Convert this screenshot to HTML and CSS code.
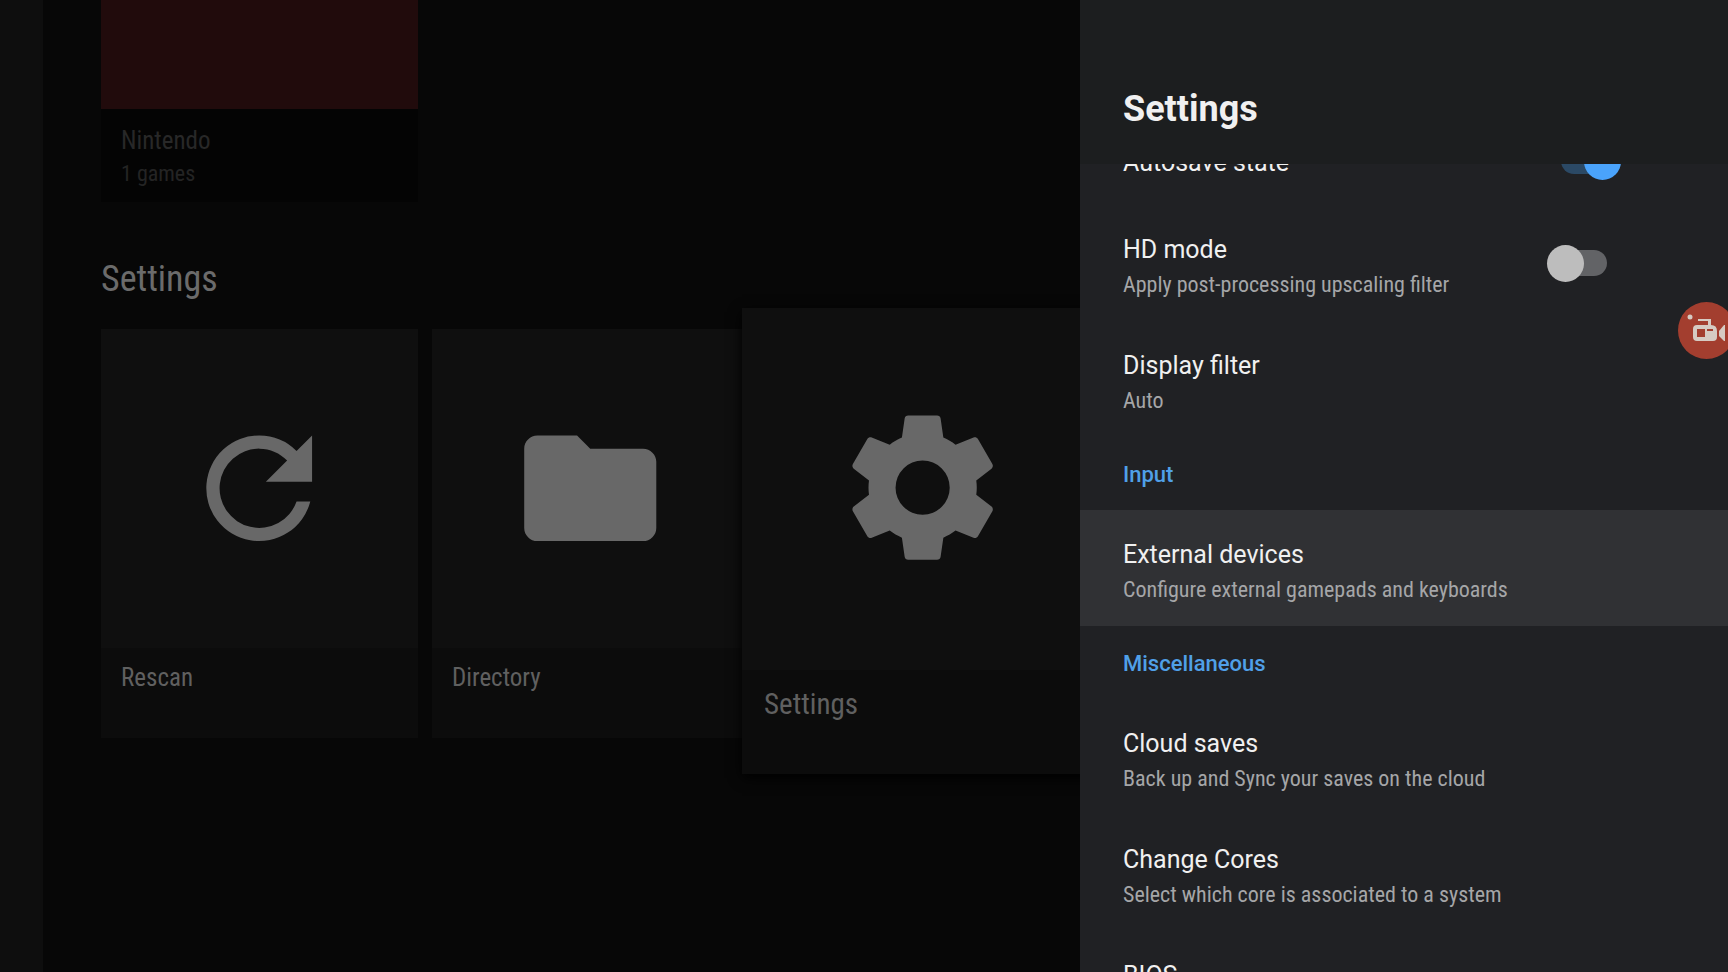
FILE: index.html
```html
<!DOCTYPE html>
<html lang="en">
<head>
<meta charset="utf-8">
<title>Settings</title>
<link rel="stylesheet" href="styles.css">
</head>
<body>
<div class="app">
  <nav class="rail" aria-label="Categories"></nav>
  <main class="browse">
    <div class="row row-systems">
      <button class="card card-system" type="button">
        <span class="art art-red"></span>
        <span class="info"><span class="card-title">Nintendo</span><span class="card-sub">1 games</span></span>
      </button>
    </div>
    <h2 class="row-title">Settings</h2>
    <div class="row">
      <button class="card" type="button">
        <span class="art"><svg class="icon" viewBox="0 0 24 24"><path d="M17.65 6.35A7.96 7.96 0 0 0 12 4a8 8 0 1 0 7.73 10h-2.08A6 6 0 1 1 12 6c1.66 0 3.14.69 4.22 1.78L13 11h7V4z"/></svg></span>
        <span class="info"><span class="card-title">Rescan</span></span>
      </button>
      <button class="card" type="button">
        <span class="art"><svg class="icon" viewBox="0 0 24 24"><path d="M10 4H4c-1.100 0-2 .9-2 2v12c0 1.100.9 2 2 2h16c1.100 0 2-.9 2-2V8c0-1.100-.9-2-2-2h-8z"/></svg></span>
        <span class="info"><span class="card-title">Directory</span></span>
      </button>
      <button class="card card-focused" type="button">
        <span class="art"><svg class="icon" viewBox="0 0 24 24"><path d="M19.430 12.980c.04-.32.07-.64.07-.98s-.03-.66-.07-.98l2.110-1.650c.19-.15.24-.42.12-.64l-2-3.460c-.12-.22-.39-.3-.61-.22l-2.490 1c-.52-.4-1.080-.73-1.690-.98l-.38-2.650C14.460 2.180 14.250 2 14 2h-4c-.25 0-.46.18-.49.42l-.38 2.650c-.61.25-1.170.59-1.690.98l-2.490-1c-.23-.09-.49 0-.61.22l-2 3.460c-.13.22-.07.49.12.64l2.110 1.650c-.04.32-.07.65-.07.98s.03.66.07.98l-2.110 1.650c-.19.15-.24.42-.12.64l2 3.460c.12.22.39.3.61.22l2.490-1c.52.4 1.080.73 1.690.98l.38 2.650c.03.24.24.42.49.42h4c.25 0 .46-.18.49-.42l.38-2.650c.61-.25 1.170-.59 1.690-.98l2.490 1c.23.09.49 0 .61-.22l2-3.460c.12-.22.07-.49-.12-.64zM12 15.750a3.750 3.750 0 1 1 0-7.500 3.750 3.750 0 0 1 0 7.500z"/></svg></span>
        <span class="info"><span class="card-title">Settings</span></span>
      </button>
    </div>
  </main>
  <aside class="panel">
    <header class="panel-head"><h1 class="panel-title">Settings</h1></header>
    <div class="prefs">
      <div class="pref pref-single">
        <label class="pref-title" for="autosave">Autosave state</label>
        <input class="switch" type="checkbox" id="autosave" checked>
      </div>
      <div class="pref">
        <label class="pref-text" for="hd"><span class="pref-title">HD mode</span><span class="pref-sub">Apply post-processing upscaling filter</span></label>
        <input class="switch" type="checkbox" id="hd">
      </div>
      <button class="pref" type="button"><span class="pref-text"><span class="pref-title">Display filter</span><span class="pref-sub">Auto</span></span></button>
      <h2 class="category">Input</h2>
      <button class="pref pref-focused" type="button"><span class="pref-text"><span class="pref-title">External devices</span><span class="pref-sub">Configure external gamepads and keyboards</span></span></button>
      <h2 class="category">Miscellaneous</h2>
      <button class="pref" type="button"><span class="pref-text"><span class="pref-title">Cloud saves</span><span class="pref-sub">Back up and Sync your saves on the cloud</span></span></button>
      <button class="pref" type="button"><span class="pref-text"><span class="pref-title">Change Cores</span><span class="pref-sub">Select which core is associated to a system</span></span></button>
      <button class="pref" type="button"><span class="pref-text"><span class="pref-title">BIOS</span></span></button>
    </div>
  </aside>
  <button class="recorder" type="button" aria-label="Screen recorder">
    <svg class="recorder-icon" viewBox="0 0 57 57"><circle cx="12" cy="15" r="2.500"/><path d="M20 17h13v7h-3v-5H20z"/><path fill-rule="evenodd" d="M19 23h14q6 0 6 6v6q0 4-4 4H19q-4 0-4-4v-8q0-4 4-4zm0 4v8h8v-8zM29 27v2h6v-2z"/><path d="M41 29l5-6h1v16h-1l-5-5z"/></svg>
  </button>
</div>
</body>
</html>
```

FILE: styles.css
```css
* { box-sizing: border-box; }
body { margin: 0; background: #070707; font-family: Roboto, sans-serif; }
button { border: 0; padding: 0; background: none; font: inherit; color: inherit; text-align: left; }
h1, h2 { margin: 0; }

.app { display: flex; height: 100vh; overflow: hidden; }
.rail { flex: none; width: 43px; background: #0e0e0e; }
.browse { flex: 1; min-width: 0; padding-left: 58px; overflow: hidden; font-family: "Roboto Condensed", Roboto, sans-serif; }

.row { display: flex; align-items: flex-start; gap: 14px; }
.row-title { padding: 56px 0 29px; font-size: 36px; line-height: 42px; font-weight: 400; color: #6b6b6b; }
.card { flex: none; display: flex; flex-direction: column; width: 317px; background: #0c0c0c; color: #606060; }
.art { display: flex; align-items: center; justify-content: center; height: 319px; background: #0f0f0f; }
.icon { width: 50%; fill: #686868; }
.info { display: flex; flex-direction: column; height: 90px; padding: 14px 20px; }
.card-title { font-size: 25px; line-height: 32px; }
.card-sub { margin-top: 2px; font-size: 22px; line-height: 30px; }
.card-system { background: #040404; color: #282828; }
.card-system .art { height: 109px; background: #210b0c; }
.card-system .info { height: 93px; padding-top: 16px; }
.card-system .card-sub { color: #242424; }
.card-focused { width: 361px; margin: -21px 0 0 -21px; box-shadow: 0 4px 12px #000; z-index: 1; }
.card-focused .art { height: 362px; padding-bottom: 2px; }
.card-focused .icon { width: 48%; }
.card-focused .info { height: 104px; padding: 17px 22px; }
.card-focused .card-title { font-size: 29px; line-height: 34px; }

.panel { flex: none; display: flex; flex-direction: column; width: 37.5%; background: #202124; color: #f0f0f0; z-index: 2; }
.panel-head { flex: none; height: 164px; padding: 88px 43px 0; background: #1c1e1f; z-index: 1; }
.panel-title { font-size: 36px; line-height: 42px; font-weight: 700; }
.prefs { display: flex; flex-direction: column; flex: 1; min-height: 0; overflow: hidden; }
.pref { flex: none; display: flex; align-items: flex-start; justify-content: space-between; height: 116px; padding: 28px 107px 0 43px; }
.pref-single { align-items: center; height: 88px; margin-top: -47px; padding-top: 0; }
.pref-single .pref-title { padding-top: 3px; }
.pref-focused { background: #303134; }
.pref-text { display: flex; flex-direction: column; gap: 2px; }
.pref-title { font-size: 25px; line-height: 34px; }
.pref-sub { font-family: "Roboto Condensed", Roboto, sans-serif; font-size: 22px; line-height: 32px; color: #a5a6a8; }
.category { flex: none; height: 73px; padding: 22px 43px; font-size: 22px; line-height: 32px; font-weight: 500; color: #50a0e8; }

.switch { appearance: none; flex: none; position: relative; display: flex; align-items: center; width: 74px; height: 38px; margin: 0; }
.pref-text + .switch { margin-top: 11px; }
.switch::before { content: ""; position: absolute; inset: 6px 14px; border-radius: 13px; background: #626366; }
.switch::after { content: ""; position: relative; width: 37px; height: 37px; border-radius: 50%; background: #bdbdbd; }
.switch:checked::before { background: #2b4965; }
.switch:checked::after { margin-left: auto; background: #4aa3fb; }

.recorder { position: fixed; top: 302px; right: -7px; z-index: 3; width: 57px; height: 57px; border-radius: 50%; background: #a33e2f; }
.recorder-icon { display: block; fill: #d6cbc3; }
```
